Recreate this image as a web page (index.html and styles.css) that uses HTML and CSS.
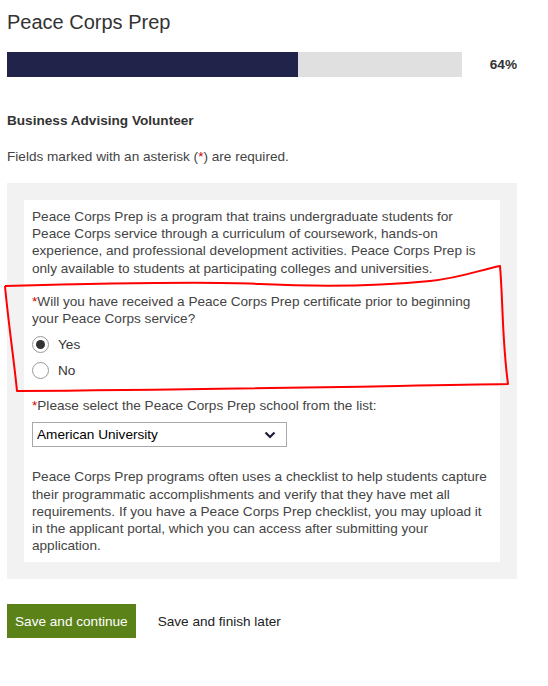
FILE: index.html
```html
<!DOCTYPE html>
<html lang="en">
    <head>
        <meta charset="UTF-8" />
        <meta name="viewport" content="width=device-width, initial-scale=1.0" />
        <title>Peace Corps Prep</title>
        <link rel="stylesheet" href="styles.css">
    </head>
    <body>
        <div class="page">
            <h1 class="page-title">Peace Corps Prep</h1>

            <div class="progress">
                <div class="progress-track">
                    <div class="progress-fill" style="width: 64%"></div>
                </div>
                <span class="progress-label">64%</span>
            </div>

            <h2 class="section-title">Business Advising Volunteer</h2>
            <p class="required-note">Fields marked with an asterisk (<span class="req">*</span>) are required.</p>

            <div class="panel">
                <div class="panel-inner">
                    <p class="intro">
                        Peace Corps Prep is a program that trains undergraduate students for
                        Peace Corps service through a curriculum of coursework, hands-on
                        experience, and professional development activities. Peace Corps Prep is
                        only available to students at participating colleges and universities.
                    </p>

                    <div class="question">
                        <p class="question-label"><span class="req">*</span>Will you have received a Peace Corps Prep certificate prior to beginning your Peace Corps service?</p>
                        <div class="options">
                            <label class="option">
                                <input type="radio" name="certificate" value="yes" checked>
                                <span>Yes</span>
                            </label>
                            <label class="option">
                                <input type="radio" name="certificate" value="no">
                                <span>No</span>
                            </label>
                        </div>
                    </div>

                    <label class="field-label" for="school"><span class="req">*</span>Please select the Peace Corps Prep school from the list:</label>
                    <div class="select-wrap">
                        <select id="school">
                            <option>American University</option>
                        </select>
                        <svg class="select-arrow" width="12" height="8" viewBox="0 0 12 8">
                            <path d="M1.5 1.5 L6 6 L10.5 1.5" fill="none" stroke="#1c1d3a" stroke-width="2.2"/>
                        </svg>
                    </div>

                    <p class="note">
                        Peace Corps Prep programs often uses a checklist to help students capture
                        their programmatic accomplishments and verify that they have met all
                        requirements. If you have a Peace Corps Prep checklist, you may upload it
                        in the applicant portal, which you can access after submitting your
                        application.
                    </p>
                </div>
            </div>

            <div class="actions">
                <button class="btn-primary">Save and continue</button>
                <a href="#" class="btn-link">Save and finish later</a>
            </div>
        </div>

        <!-- hand-drawn highlight around the question -->
        <svg class="scribble" width="548" height="686" viewBox="0 0 548 686">
            <path d="M5 286 C 80 284, 200 281, 260 284 C 320 287, 380 286, 430 281 C 460 278, 480 270, 500 266 C 503 300, 502 340, 508 384 C 380 386, 200 390, 17 391 C 14 360, 8 320, 5 286"
                  fill="none" stroke="#f00" stroke-width="2" stroke-linejoin="round"/>
        </svg>
    </body>
</html>
```

FILE: styles.css
```css
* {
    margin: 0;
    padding: 0;
    box-sizing: border-box;
}

body {
    font-family: 'Liberation Sans', Arial, sans-serif;
    font-size: 13.6px;
    color: #444;
    background-color: #fff;
}

.page {
    width: 524px;
    padding: 0 7px;
}

.page-title {
    font-size: 20px;
    font-weight: normal;
    line-height: 24px;
    color: #333;
    margin: 10px 0 18px;
}

.progress {
    display: flex;
    align-items: center;
}

.progress-track {
    width: 455px;
    height: 25px;
    background-color: #e0e0e0;
}

.progress-fill {
    height: 100%;
    background-color: #22234b;
}

.progress-label {
    flex: 1;
    text-align: right;
    font-weight: bold;
    color: #333;
}

.section-title {
    font-size: 13.6px;
    line-height: 17px;
    color: #333;
    margin-top: 35px;
}

.required-note {
    line-height: 17px;
    margin-top: 19px;
}

.req {
    color: #c00;
}

.panel {
    margin-top: 18px;
    background-color: #f2f2f2;
    padding: 17px;
}

.panel-inner {
    background-color: #fff;
    padding: 8px 8px 8px;
    line-height: 17.2px;
}

.question {
    margin-top: 16px;
}

.options {
    margin-top: 4px;
}

.option {
    display: flex;
    align-items: center;
    height: 26.5px;
    gap: 9px;
    color: #333;
}

.option input {
    appearance: none;
    width: 17px;
    height: 17px;
    border: 1px solid #999;
    border-radius: 50%;
    background-color: #fff;
    display: flex;
    justify-content: center;
    align-items: center;
    margin: 0;
}

.option input:checked::after {
    content: '';
    width: 9px;
    height: 9px;
    border-radius: 50%;
    background-color: #333;
}

.field-label {
    display: block;
    margin-top: 13px;
}

.select-wrap {
    position: relative;
    width: 255px;
    margin-top: 8px;
}

.select-wrap select {
    appearance: none;
    display: block;
    width: 100%;
    height: 25px;
    border: 1px solid #a9a9a9;
    border-radius: 0;
    background-color: #fff;
    font-family: inherit;
    font-size: 13.6px;
    color: #000;
    padding: 0 24px 0 4px;
}

.select-arrow {
    position: absolute;
    right: 11px;
    top: 9px;
    pointer-events: none;
}

.note {
    margin-top: 21px;
}

.actions {
    display: flex;
    align-items: center;
    gap: 22px;
    margin-top: 25px;
}

.btn-primary {
    height: 34px;
    padding: 0 8px;
    background-color: #5a8219;
    color: #fff;
    border: none;
    font-family: inherit;
    font-size: 13.6px;
    cursor: pointer;
}

.btn-link {
    color: #222;
    text-decoration: none;
}

.scribble {
    position: absolute;
    top: 0;
    left: 0;
    pointer-events: none;
}
```
